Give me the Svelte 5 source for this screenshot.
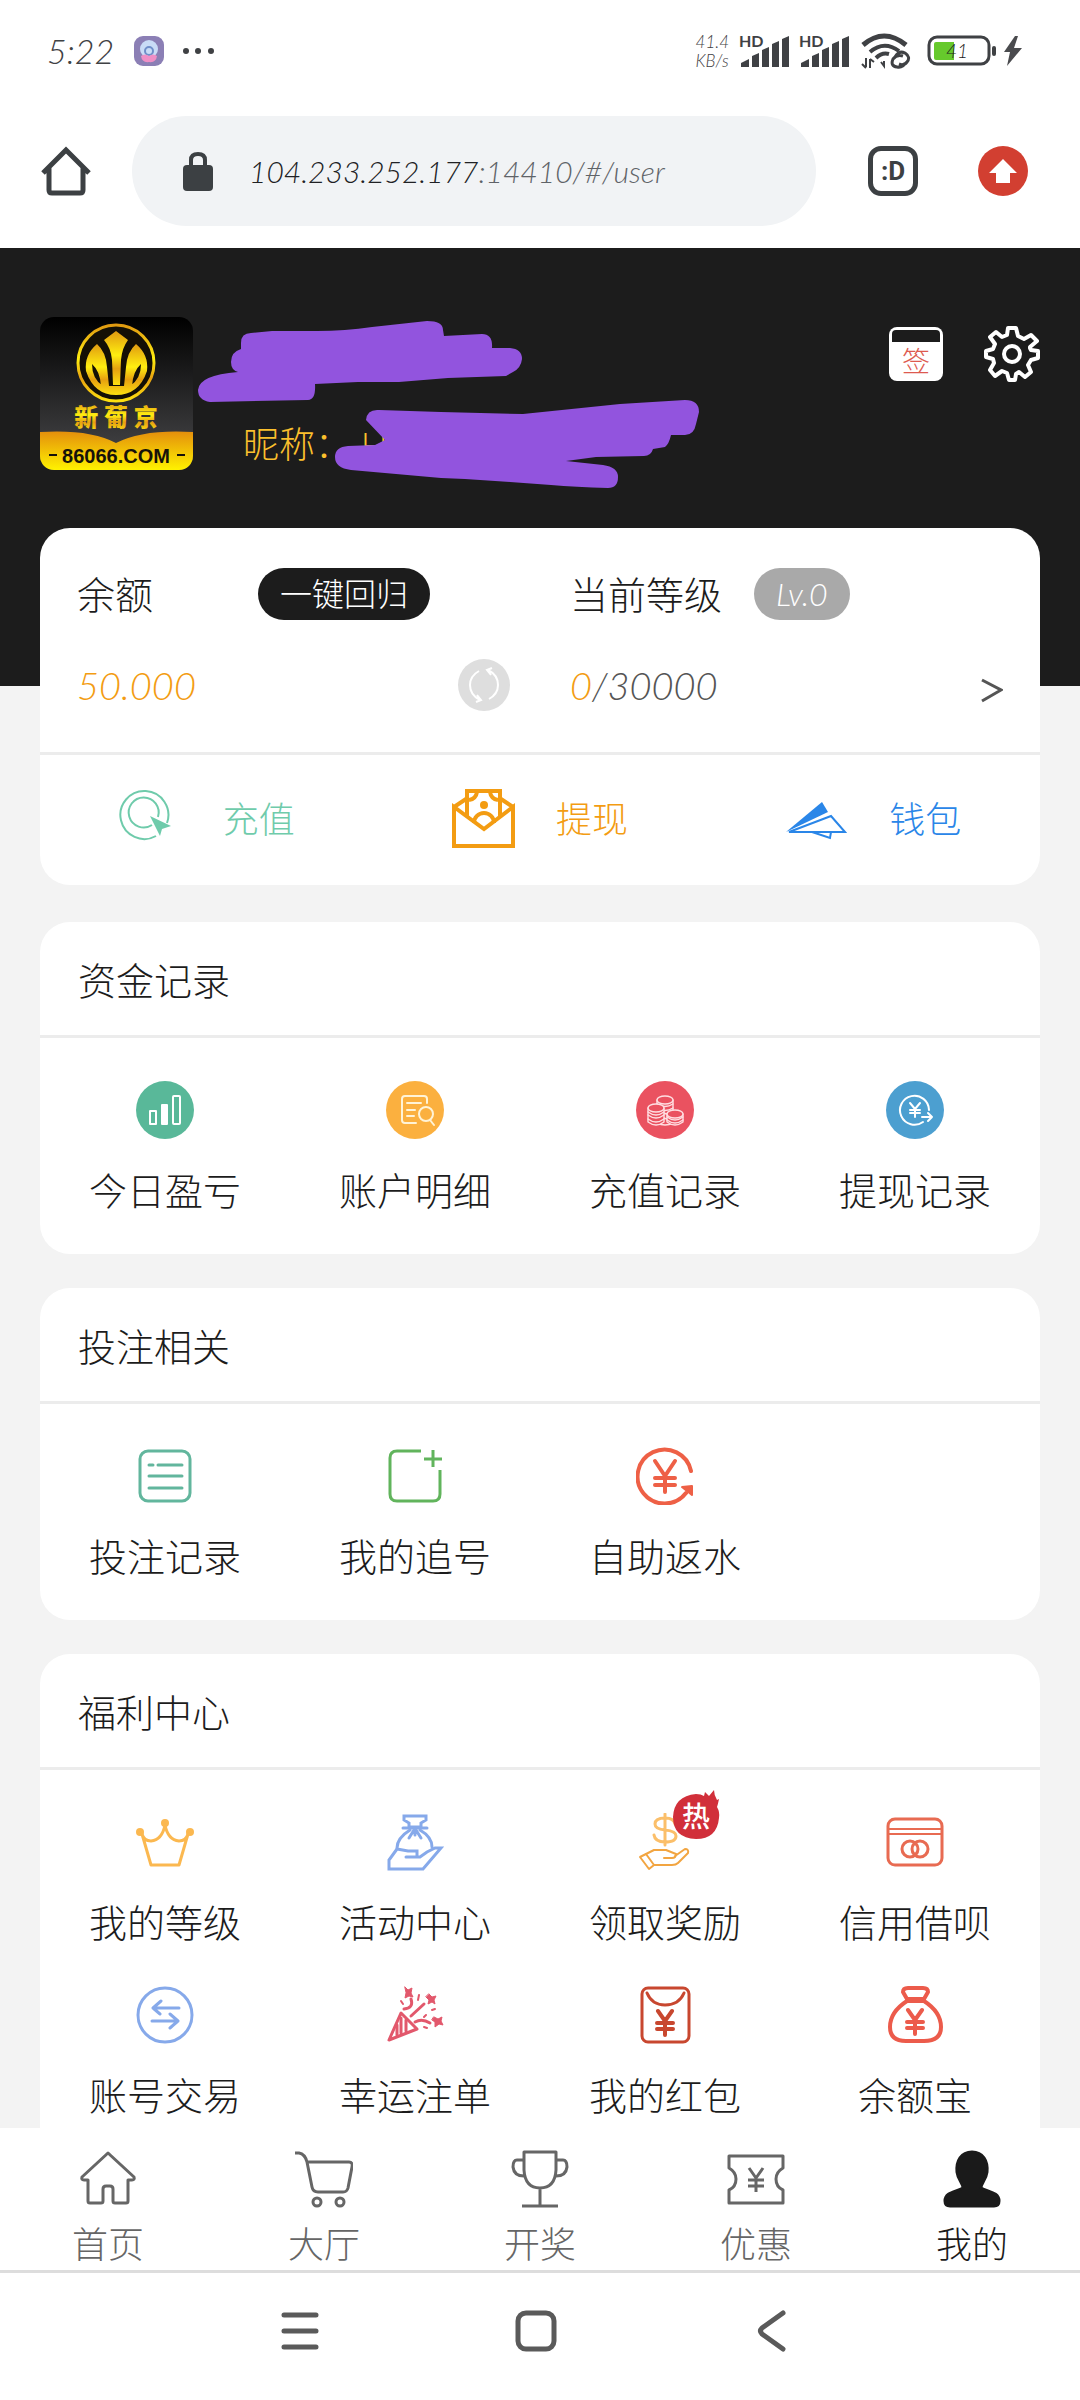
<!--
  Mitgliederbereich (mobil): Statusleiste, Adresszeile, Profilkopf,
  Konto-Karte, Menü-Karten, Tab-Leiste und Systemnavigation.
-->
<script>
  const actions = [
    { id: 'recharge', label: '充值', color: '#6fcbab' },
    { id: 'withdraw', label: '提现', color: '#f39c12' },
    { id: 'wallet', label: '钱包', color: '#2a86e8' },
  ];

  const sections = [
    {
      title: '资金记录',
      items: [
        { icon: 'profit', label: '今日盈亏' },
        { icon: 'detail', label: '账户明细' },
        { icon: 'coins', label: '充值记录' },
        { icon: 'payout', label: '提现记录' },
      ],
    },
    {
      title: '投注相关',
      items: [
        { icon: 'list', label: '投注记录' },
        { icon: 'chase', label: '我的追号' },
        { icon: 'rebate', label: '自助返水' },
      ],
    },
    {
      title: '福利中心',
      items: [
        { icon: 'crown', label: '我的等级' },
        { icon: 'activity', label: '活动中心' },
        { icon: 'reward', label: '领取奖励', hot: true },
        { icon: 'credit', label: '信用借呗' },
        { icon: 'exchange', label: '账号交易' },
        { icon: 'party', label: '幸运注单' },
        { icon: 'packet', label: '我的红包' },
        { icon: 'moneybag', label: '余额宝' },
      ],
    },
  ];

  const tabs = [
    { id: 'home', label: '首页' },
    { id: 'hall', label: '大厅' },
    { id: 'draw', label: '开奖' },
    { id: 'offers', label: '优惠' },
    { id: 'mine', label: '我的' },
  ];

  let activeTab = $state('mine');
</script>

{#snippet yen(x, y, width)}
  <path transform="translate({x} {y})" stroke-width={width}
        d="M-7 -11 L0 -1 L7 -11 M0 -1 V13 M-8 1 H8 M-8 7 H8" />
{/snippet}

{#snippet signal()}
  <svg class="signal" viewBox="-2 -8 52 50" width="52" height="50" aria-hidden="true">
    <text x="0" y="13" font-size="16" font-weight="700">HD</text>
    <path d="M2 33 v-4 l8 -4 v8z M13 33 v-11 l7 -3 v14z M23 33 v-17 l7 -3 v20z M33 33 v-23 l7 -3 v26z M43 33 v-28 l7 -3 v31z" />
  </svg>
{/snippet}

{#snippet menuIcon(name)}
  <svg viewBox="0 0 58 58" width="58" height="58" fill="none" stroke-linecap="round" stroke-linejoin="round" aria-hidden="true">
    {#if name === 'profit'}
      <circle cx="29" cy="29" r="29" fill="#59b899" />
      <g stroke="#fff" stroke-width="2">
        <rect x="14" y="30" width="6" height="13" />
        <rect x="26" y="24" width="5" height="19" fill="#fff" />
        <rect x="37" y="15" width="7" height="28" rx="1" />
      </g>
    {:else if name === 'detail'}
      <circle cx="29" cy="29" r="29" fill="#fbb03f" />
      <g stroke="#fff3d6" stroke-width="2">
        <path d="M41 22 V18 Q41 15 38 15 H19 Q16 15 16 18 V39 Q16 42 19 42 H30" />
        <path d="M21 22 H35 M21 29 H29 M21 35 H28" />
        <circle cx="40" cy="33" r="7" /><path d="M44 39 L48 44" />
      </g>
    {:else if name === 'coins'}
      <circle cx="29" cy="29" r="29" fill="#ea5260" />
      <g stroke="#ffdfe2" stroke-width="1.4" fill="#ea5260">
        <path d="M21 19 V42 Q29 46 37 42 V19" />
        <path d="M21 23 Q29 28 37 23 M21 27 Q29 32 37 27 M27 32 Q32 34 37 31 M28 37 Q32 39 35 37" />
        <ellipse cx="29" cy="19" rx="8" ry="4" />
        <path d="M12 27 V41 Q20 47 28 41 V27" />
        <path d="M12 31 Q20 37 28 31 M12 34 Q20 40 28 34 M12 38 Q20 44 28 38" />
        <ellipse cx="20" cy="27" rx="8" ry="4" />
        <path d="M31 33 V41 Q39 47 47 41 V33" />
        <path d="M31 36 Q39 42 47 36 M31 39 Q39 45 47 39" />
        <ellipse cx="39" cy="33" rx="8" ry="4" />
      </g>
    {:else if name === 'payout'}
      <circle cx="29" cy="29" r="29" fill="#4c9fd0" />
      <g stroke="#fff" stroke-width="2">
        <path d="M43 29 A14.500 14.500 0 1 0 37 41" />
        <path d="M36 36 H46 M42 32 L46 36 L42 40" />
        <path d="M24 22 L29 28 L34 22 M29 28 V36 M24 29 H34 M24 32 H34" />
      </g>
    {:else if name === 'list'}
      <g stroke="#62b69d" stroke-width="3">
        <rect x="4" y="4" width="50" height="50" rx="8" />
        <path d="M13 18 H17 M22 18 H46 M13 29 H46 M13 41 H46" />
      </g>
    {:else if name === 'chase'}
      <g stroke="#61b45c" stroke-width="3" stroke-linecap="butt">
        <path d="M35 4 H11 Q4 4 4 11 V47 Q4 54 11 54 H47 Q54 54 54 47 V23" />
        <path d="M47 3 V20 M38 12 H56" />
      </g>
    {:else if name === 'rebate'}
      <g stroke="#ee6046" stroke-width="4">
        <path d="M55 24 A27 27 0 1 0 50 46" />
        <path d="M46 40 L56 39 L56 48 Z" fill="#ee6046" stroke-width="2" />
        <path d="M19 14 L29 29 L39 14 M29 29 V45 M19 31 H39 M19 38 H39" />
      </g>
    {:else if name === 'crown'}
      <g stroke="#fbb850" stroke-width="3">
        <path d="M6 21 Q8 28 15 28 Q26 27 29 12 Q32 27 43 28 Q50 28 52 21 L43 52 H15 Z" />
        <g fill="#fbb850" stroke="none">
          <circle cx="29" cy="10" r="4" /><circle cx="4" cy="19" r="4" /><circle cx="54" cy="19" r="4" />
        </g>
      </g>
    {:else if name === 'activity'}
      <g stroke="#86a9ea" stroke-width="3" stroke-linejoin="miter">
        <path d="M18 3 H40 V7 L35 10 V14 H23 V10 L18 7 Z M17 15 H41" />
        <path d="M24 17 Q11 25 11 35 M34 17 Q46 24 46 34 M28 17 L23 25 M30 17 L35 25 M29 17 V22" />
        <path d="M11 36 L3 47 V56 H37 L55 35 H49 L41 39 L34 44 H20 M31 44 V38 H22 L11 36" />
      </g>
    {:else if name === 'reward'}
      <g stroke="#fbbf6a" stroke-width="3">
        <path d="M39 11 Q38 5 29 5 Q19 5 19 11 Q19 16 29 17 Q40 18 40 23 Q40 29 29 29 Q19 29 18 22 M29 1 V32" />
      </g>
      <g stroke="#f2a541" stroke-width="2">
        <path d="M4 44 L10 41 L18 52 L13 56 Z" />
        <path d="M10 41 L18 37 H30 L40 41 Q40 45 36 45 H28 M39 43 L49 36 Q53 36 52 40 L42 50 Q40 52 36 52 H18" />
      </g>
    {:else if name === 'credit'}
      <g stroke="#e86b52" stroke-width="3">
        <rect x="2" y="6" width="54" height="46" rx="7" />
        <path d="M2 16 H56 M2 21 H56" stroke-width="2" />
        <circle cx="24" cy="36" r="8" /><circle cx="34" cy="36" r="8" />
      </g>
    {:else if name === 'exchange'}
      <g stroke="#86a9ea" stroke-width="3">
        <circle cx="29" cy="29" r="27" />
        <path d="M43 22 H17 L25 15 M17 22 L24 28 M16 35 H42 L34 28 M42 35 L34 42" />
      </g>
    {:else if name === 'party'}
      <g stroke="#e2586c" stroke-width="3">
        <path d="M15 27 L3 54 L31 43 Z" />
        <path d="M15 32 V47 M20 34 V45 M11 39 V49" />
        <path d="M18 23 Q28 22 25 13 M25 30 L38 18 M29 36 Q36 32 44 37" />
        <path d="M15 15 L17 18 M33 9 L32 14 M38 31 L40 29 M46 24 L49 23 M38 41 L41 42" stroke-width="2" />
      </g>
      <g fill="#e2586c" stroke="#e2586c" stroke-width="1">
        <path d="M19 1 l3 3 4 -2 -1 5 2 4 -4 -1 -4 2 1 -5z M43 8 l3 3 4 -1 -2 4 1 4 -3 -2 -4 2 1 -4 -3 -3z M48 31 l4 2 4 -2 -1 4 2 4 -4 -1 -4 3 0 -5 -3 -2z" />
      </g>
    {:else if name === 'packet'}
      <g stroke="#c8472f" stroke-width="3">
        <rect x="6" y="2" width="47" height="54" rx="6" />
        <path d="M11 7 Q16 19 29 19 Q43 19 48 7" />
        {@render yen(29, 36, 4)}
      </g>
    {:else if name === 'moneybag'}
      <g stroke="#ec5b4b" stroke-width="4">
        <path d="M21 13 L17 6 Q17 2 22 2 H37 Q42 2 42 6 L38 13 Z" />
        <path d="M21 15 Q4 26 4 41 Q4 55 20 55 H38 Q55 55 55 41 Q55 26 38 15 Z" />
        {@render yen(29, 35, 4)}
      </g>
    {/if}
  </svg>
{/snippet}

{#snippet actionIcon(id)}
  <svg viewBox="0 0 64 64" width="64" height="64" fill="none" aria-hidden="true">
    {#if id === 'recharge'}
      <g stroke="#6fcbab" stroke-width="2">
        <path d="M48 36 A24 24 0 1 0 37 49" />
        <path d="M39 30 A15 15 0 1 0 33 38" />
      </g>
      <path d="M31 29 L52 39 L43 42 L41 49 Z" fill="#6fcbab" />
    {:else if id === 'withdraw'}
      <g stroke="#f39c12" stroke-width="4">
        <path d="M2 20 V59 H61 V20 L32 42 Z M2 20 L14 12 M61 20 L49 12 M15 29 V4 H48 V29" />
        <path d="M22 36 A10 10 0 0 1 42 36 M17 13 Q24 12 25 5 M46 13 Q39 12 38 5" />
      </g>
      <circle cx="32" cy="18" r="4" fill="#f39c12" />
    {:else}
      <path d="M1 45 L37 15 L43 25 Z" fill="#2a86e8" />
      <path d="M4 45 L46 29 L60 45 Z M27 45 L45 51 L46 45" stroke="#2a86e8" stroke-width="2" />
    {/if}
  </svg>
{/snippet}

{#snippet tabIcon(id)}
  <svg viewBox="0 0 58 58" width="58" height="58" fill="none" stroke="currentColor" stroke-width="3" stroke-linejoin="round" aria-hidden="true">
    {#if id === 'home'}
      <path d="M29 3 L3 27 Q2 30 5 30 H9 V51 Q9 53 11 53 H22 Q24 53 24 51 V39 Q24 36 27 36 H31 Q34 36 34 39 V51 Q34 53 36 53 H47 Q49 53 49 51 V30 H53 Q56 30 55 27 Z" />
    {:else if id === 'hall'}
      <path d="M0 3 H4 Q10 4 12 12 H54 Q58 12 57 17 L53 38 Q52 42 48 42 H23 Q18 42 17 37 L12 12" />
      <circle cx="22" cy="52" r="4" /><circle cx="45" cy="52" r="4" />
    {:else if id === 'draw'}
      <path d="M13 2 H45 V20 Q44 38 29 38 Q14 38 13 20 Z M13 10 H6 Q2 10 2 17 Q3 26 13 26 M45 10 H52 Q56 10 56 17 Q55 26 45 26 M29 38 V56 M11 56 H47" />
    {:else if id === 'offers'}
      <path d="M2 6 H56 V18 Q49 22 49 29 Q49 37 56 40 V53 H2 V40 Q9 37 9 29 Q9 22 2 18 Z" />
      {@render yen(29, 29, 3)}
    {:else}
      <path d="M29 2 C40 2 45 11 44 22 C43 30 38 33 38 38 C45 42 56 42 56 51 Q56 56 51 56 H7 Q2 56 2 51 C2 42 13 42 20 38 C20 33 15 30 14 22 C13 11 18 2 29 2 Z" fill="currentColor" />
    {/if}
  </svg>
{/snippet}

<div class="app">
  <header>
    <div class="status">
      <span class="clock">5:22</span>
      <svg viewBox="0 0 30 30" width="30" height="30" aria-hidden="true">
        <rect width="30" height="30" rx="9" fill="#8b7fb5" />
        <circle cx="15" cy="13" r="9" fill="#c9dcf6" />
        <circle cx="15" cy="15" r="4" fill="none" stroke="#6f8fc9" stroke-width="2" />
        <path d="M7 20 Q11 17 15 20 Q19 17 23 20 Q22 27 15 26 Q8 27 7 20Z" fill="#ef8fc6" />
      </svg>
      <svg viewBox="0 0 34 8" width="34" height="8" fill="#3f4144" aria-hidden="true">
        <circle cx="4" cy="4" r="3" /><circle cx="16" cy="4" r="3" /><circle cx="29" cy="4" r="3" />
      </svg>
      <span class="speed"><span>41.4</span><span>KB/s</span></span>
      {@render signal()}
      {@render signal()}
      <svg class="wifi" viewBox="0 0 50 36" width="50" height="36" fill="none" stroke="#3f4144" aria-hidden="true">
        <path d="M2 12 Q23 -6 45 12" stroke-width="5" />
        <path d="M9 19 Q23 7 38 18" stroke-width="4" />
        <path d="M15 25 Q21 19 28 21" stroke-width="4" />
        <path d="M5 25 V34 M1 31 L5 35 M9 35 V26 M13 29 L9 26 M20 29 L23 33 V28" stroke-width="2" />
        <path d="M34 24 Q38 17 44 20 Q50 24 46 29 Q43 33 38 31 M42 23 Q36 21 32 26 Q29 33 36 34 Q42 35 44 30" stroke-width="3" />
      </svg>
      <svg class="battery" viewBox="0 0 96 32" width="96" height="32" aria-hidden="true">
        <rect x="2" y="2" width="60" height="27" rx="8" fill="#fff" stroke="#3f4144" stroke-width="3" />
        <path d="M7 9 Q7 7 9 7 H27 V25 H9 Q7 25 7 23Z" fill="#66c92c" />
        <text x="19" y="23" font-size="19">41</text>
        <rect x="65" y="11" width="4" height="10" rx="2" fill="#3f4144" />
        <path d="M88 1 L77 17 H83 L80 31 L95 13 H87 L91 1 Z" fill="#4a4b4e" />
      </svg>
    </div>
    <div class="browser">
      <button class="plain" aria-label="主页">
        <svg viewBox="0 0 50 50" width="50" height="50" fill="none" stroke="#3c4043" stroke-width="5" aria-hidden="true">
          <path d="M2 27 L25 4 L48 27 M8 22 V44 Q8 47 11 47 H39 Q42 47 42 44 V22" />
        </svg>
      </button>
      <button class="address">
        <svg viewBox="0 0 30 40" width="30" height="40" aria-hidden="true">
          <path d="M8 16 V9 Q8 3 15 3 Q22 3 22 9 V16" fill="none" stroke="#3c4043" stroke-width="4" />
          <rect y="14" width="30" height="26" rx="4" fill="#3c4043" />
        </svg>
        <span><span class="host">104.233.252.177</span>:14410/#/user</span>
      </button>
      <button class="plain pages" aria-label="标签页">
        <span>:D</span>
      </button>
      <button class="plain" aria-label="更新">
        <svg viewBox="0 0 50 50" width="50" height="50" aria-hidden="true">
          <circle cx="25" cy="25" r="25" fill="#d23f31" />
          <path d="M25 13 L39 27 H32 V37 H18 V27 H11 Z" fill="#fff" />
        </svg>
      </button>
    </div>
  </header>

  <main>
    <section class="profile">
      <svg class="avatar" viewBox="0 0 153 153" width="153" height="153" aria-hidden="true">
        <defs>
          <linearGradient id="night" x1="0" y1="0" x2="0" y2="1">
            <stop offset="0" stop-color="#000" /><stop offset="1" stop-color="#4a4a4c" />
          </linearGradient>
          <linearGradient id="gold" x1="0" y1="0" x2="0" y2="1">
            <stop offset="0" stop-color="#e09a10" /><stop offset=".45" stop-color="#ffee10" />
            <stop offset=".7" stop-color="#e6a010" /><stop offset="1" stop-color="#fde010" />
          </linearGradient>
          <linearGradient id="band" x1="0" y1="0" x2="0" y2="1">
            <stop offset="0" stop-color="#e48f0c" /><stop offset="1" stop-color="#fff200" />
          </linearGradient>
          <clipPath id="tile"><rect width="153" height="153" rx="14" /></clipPath>
        </defs>
        <g clip-path="url(#tile)">
          <rect width="153" height="153" fill="url(#night)" />
          <circle cx="76" cy="46" r="38" fill="#141005" stroke="url(#gold)" stroke-width="3" />
          <g fill="url(#gold)">
            <path d="M76 14 L88 23 Q82 31 81 43 L80 68 H73 L72 43 Q71 31 64 23 Z" />
            <path d="M57 27 Q44 38 46 54 Q54 78 76 78 Q99 78 107 54 Q109 38 96 27 Q87 35 86 50 L84 69 H92 Q93 54 101 47 Q101 62 90 69 H63 Q52 62 52 47 Q60 54 61 69 H69 L67 50 Q66 35 57 27 Z" />
          </g>
          <text class="brand" x="76" y="109" font-size="24" text-anchor="middle" fill="url(#gold)">新 葡 京</text>
          <path d="M0 115 Q50 112 76 126 Q103 112 153 115 V153 H0 Z" fill="url(#band)" />
          <text class="site" x="76" y="146" font-size="20" text-anchor="middle">86066.COM</text>
          <path d="M9 138 H17 M137 138 H145" stroke="#16120a" stroke-width="2" />
        </g>
      </svg>
      <p class="nickname">昵称： H</p>
      <svg class="scribble" viewBox="190 310 520 190" width="520" height="190" fill="#9254de" aria-hidden="true">
        <path d="M241 343 Q241 333 251 333 L272 331 L317 331 Q345 331 372 327 L427 321 Q443 321 443 330 L444 336 L482 334 Q493 334 492 348 L510 348 Q522 349 522 359 Q521 368 513 372 L506 376 L448 378 L399 382 L358 382 L315 384 Q316 400 308 400 L210 402 Q198 400 198 390 Q199 375 238 372 Q231 370 231 362 Q231 352 241 349 Z" />
        <path d="M366 420 Q367 409 379 410 L441 412 L523 414 L620 404 L685 400 Q699 400 699 412 L696 424 Q694 435 685 435 L671 435 Q669 444 665 447 L653 449 Q651 456 644 456 L596 457 L566 461 L603 465 Q618 467 618 477 Q618 488 608 488 Q575 487 551 485 L510 482 L465 479 L441 478 L351 470 Q335 468 335 457 Q335 447 348 446 L375 445 L385 440 Z" />
      </svg>
      <div class="tools">
        <button class="plain" aria-label="签到">
          <svg viewBox="0 0 56 56" width="56" height="56" aria-hidden="true">
            <rect x="1" y="1" width="54" height="54" rx="8" fill="#fff" />
            <path d="M4 16 V8 Q4 4 8 4 H48 Q52 4 52 8 V16 Z" fill="#1c1c1c" />
            <text x="28" y="46" font-size="28" text-anchor="middle" fill="#dd5a50">签</text>
          </svg>
        </button>
        <button class="plain" aria-label="设置">
          <svg viewBox="0 0 56 56" width="56" height="56" fill="none" stroke="#fff" stroke-width="4" stroke-linejoin="round" aria-hidden="true">
            <path d="M24 2 H32 L34 10 L40 13 L47 9 L53 15 L46 21 V22 L47 24 L54 25 V32 L47 34 L44 39 L47 46 L41 51 L35 46 L32 48 L31 54 H25 L23 47 L18 45 L11 50 L6 44 L10 37 L9 33 L2 31 V25 L9 23 L11 18 L6 11 L12 6 L18 11 L23 9 Z" />
            <circle cx="28" cy="28" r="8" />
          </svg>
        </button>
      </div>
    </section>

    <div class="cards">
      <section class="card">
        <div class="account">
          <div class="row">
            <span>余额</span>
            <button class="pill recall">一键回归</button>
          </div>
          <div class="row">
            <span>当前等级</span>
            <span class="pill level">Lv.0</span>
          </div>
          <div class="row amount">
            <span class="gold">50.000</span>
            <button class="plain" aria-label="刷新余额">
              <svg viewBox="0 0 52 52" width="52" height="52" fill="none" stroke="#fff" stroke-width="2" aria-hidden="true">
                <circle cx="26" cy="26" r="26" fill="#dedede" stroke="none" />
                <path d="M21 12 Q12 17 12 26 Q12 36 22 41 M31 40 Q40 35 40 26 Q40 16 30 11 M19 36 L23 41 L18 43 M33 16 L29 11 L34 9" />
              </svg>
            </button>
          </div>
          <div class="row amount">
            <span><span class="gold">0</span>/30000</span>
            <button class="plain" aria-label="等级详情">
              <svg viewBox="0 0 22 36" width="22" height="36" fill="none" stroke="#555" stroke-width="3" aria-hidden="true">
                <path d="M1 13 L20 23 L1 34" />
              </svg>
            </button>
          </div>
        </div>
        <div class="actions">
          {#each actions as action (action.id)}
            <button class="plain action" style:color={action.color}>
              {@render actionIcon(action.id)}
              {action.label}
            </button>
          {/each}
        </div>
      </section>

      {#each sections as section (section.title)}
        <section class="card">
          <h2>{section.title}</h2>
          <div class="menu">
            {#each section.items as item (item.label)}
              <button class="plain item">
                <span class="icon">
                  {@render menuIcon(item.icon)}
                  {#if item.hot}
                    <svg class="hot" viewBox="0 0 48 50" width="48" height="50" aria-hidden="true">
                      <path d="M24 4 Q29 4 32 6 L33 2 L37 6 L42 0 Q42 5 45 10 L47 9 Q46 14 45 17 Q48 22 47 28 Q45 49 24 49 Q1 48 1 27 Q2 6 24 4 Z" fill="#d12f3a" />
                      <text x="24" y="37" font-size="28" text-anchor="middle" fill="#fff">热</text>
                    </svg>
                  {/if}
                </span>
                {item.label}
              </button>
            {/each}
          </div>
        </section>
      {/each}
    </div>
  </main>

  <footer>
    <nav class="tabs">
      {#each tabs as tab (tab.id)}
        <button class="plain tab" class:active={activeTab === tab.id}
                onclick={() => activeTab = tab.id}>
          {@render tabIcon(tab.id)}
          {tab.label}
        </button>
      {/each}
    </nav>
    <div class="system">
      <button class="plain" aria-label="最近任务">
        <svg viewBox="0 0 42 42" width="42" height="42" stroke="#5a5a5a" stroke-width="5" stroke-linecap="round" aria-hidden="true">
          <path d="M4 5 H36 M4 21 H36 M4 37 H36" />
        </svg>
      </button>
      <button class="plain" aria-label="主屏幕">
        <svg viewBox="0 0 42 42" width="42" height="42" fill="none" stroke="#5a5a5a" stroke-width="5" aria-hidden="true">
          <rect x="3" y="3" width="36" height="36" rx="8" />
        </svg>
      </button>
      <button class="plain" aria-label="返回">
        <svg viewBox="0 0 42 42" width="42" height="42" fill="none" stroke="#5a5a5a" stroke-width="5" stroke-linecap="round" stroke-linejoin="round" aria-hidden="true">
          <path d="M33 3 L12 18 Q9 21 12 24 L33 39" />
        </svg>
      </button>
    </div>
  </footer>
</div>

<style>
  :global(body) { background: #f3f3f3; }

  .app {
    display: flex; flex-direction: column; height: 100vh;
    font-family: Lato, "Noto Sans CJK SC", sans-serif; font-weight: 300;
    font-size: 38px; line-height: 52px; color: #1c1c1c;
  }
  svg { display: block; flex: none; }
  button { font: inherit; color: inherit; cursor: pointer; border: none; }
  .plain { padding: 0; background: none; }

  header { background: #fff; }
  .status { display: flex; align-items: center; height: 102px; padding: 0 57px 0 47px; color: #3f4144; }
  .clock { font-size: 34px; font-style: italic; margin-right: 20px; }
  .status > svg + svg { margin-left: 18px; }
  .speed { display: flex; flex-direction: column; margin-left: auto; margin-right: 8px; font-size: 17px; line-height: 19px; font-style: italic; }
  .status > .signal + .signal { margin-left: 8px; }
  .status > .wifi { margin-left: 12px; }
  .status > .battery { margin-left: 16px; }
  .signal { fill: #3f4144; }
  .battery text { font-style: italic; fill: #222; }

  .browser { display: flex; align-items: center; padding: 14px 52px 22px 41px; }
  .address {
    flex: 1; display: flex; align-items: center; gap: 36px;
    height: 110px; margin: 0 52px 0 41px; padding: 0 51px;
    border-radius: 55px; background: #f1f3f5;
    font-size: 30px; font-style: italic; color: #5f6368;
  }
  .host { color: #202124; }
  .pages {
    display: grid; place-items: center; box-sizing: border-box;
    width: 50px; height: 50px; margin-right: 60px;
    border: 5px solid #3c4043; border-radius: 13px;
    font-family: Roboto, sans-serif; font-size: 26px; line-height: 32px; font-weight: 700; color: #3c4043;
  }

  main { flex: 1; min-height: 0; overflow-y: auto; scrollbar-width: none; background: #f3f3f3; }

  .profile {
    position: relative; display: flex; align-items: flex-start;
    height: 369px; padding: 69px 40px 0; background: #1c1c1c;
  }
  .brand { font-weight: 900; }
  .site { font-family: "Liberation Sans Narrow", "Liberation Sans", sans-serif; font-weight: 700; fill: #16120a; }
  .nickname { margin: 101px 0 0 50px; font-size: 36px; color: #fbc02d; }
  .scribble { position: absolute; left: 190px; top: 62px; }
  .tools { display: flex; gap: 40px; margin: 9px 0 0 auto; }

  .cards { display: flex; flex-direction: column; gap: 34px; margin-top: -158px; padding: 0 40px 40px; }
  .card { position: relative; background: #fff; border-radius: 30px; }
  .card:first-child { margin-bottom: 3px; }
  .card h2 { margin: 0; padding: 32px 38px 29px; font-size: 38px; font-weight: 300; border-bottom: 3px solid #ececec; }

  .account { display: grid; grid-template-columns: 1fr 1fr; gap: 39px 60px; padding: 40px 37px 41px; border-bottom: 3px solid #ececec; }
  .row { display: flex; align-items: center; height: 52px; }
  .pill { padding: 0 22px; border-radius: 26px; font-size: 32px; line-height: 52px; color: #fff; }
  .recall { margin-left: 105px; background: #1c1c1c; }
  .level { margin-left: 32px; background: #a9a9a9; font-style: italic; }
  .amount { justify-content: space-between; font-size: 38px; font-style: italic; color: #555; }
  .gold { color: #f39c12; }

  .actions { display: grid; grid-template-columns: repeat(3, 1fr); padding: 32px 0 34px; }
  .action { display: flex; align-items: center; justify-content: center; gap: 40px; font-size: 36px; }

  .menu { display: grid; grid-template-columns: repeat(4, 1fr); gap: 38px 0; padding: 43px 0 38px; }
  .item { display: flex; flex-direction: column; align-items: center; gap: 25px; }
  .icon { position: relative; }
  .hot { position: absolute; left: 36px; top: -23px; }
  .hot text { font-weight: 500; }

  footer { background: #fff; }
  .tabs { display: grid; grid-template-columns: repeat(5, 1fr); padding: 22px 0 0; border-bottom: 3px solid #ddd; }
  .tab { display: flex; flex-direction: column; align-items: center; gap: 10px; font-size: 36px; color: #666; }
  .tab.active { color: #1a1a1a; }
  .system { display: flex; justify-content: center; gap: 193px; padding: 37px 8px 48px 0; }
</style>
